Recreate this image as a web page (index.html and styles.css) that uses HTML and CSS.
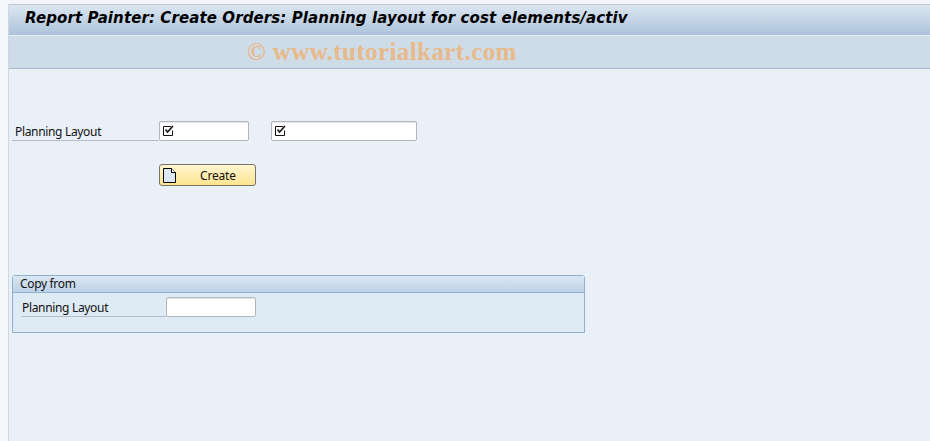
FILE: index.html
```html
<!DOCTYPE html>
<html lang="en">
<head>
    <meta charset="UTF-8">
    <title>Report Painter: Create Orders</title>
    <link rel="stylesheet" href="styles.css">
</head>
<body>
    <div class="window">
        <div class="title-bar">Report Painter: Create Orders: Planning layout for cost elements/activ</div>
        <div class="tool-bar">
            <span class="watermark">© www.tutorialkart.com</span>
        </div>
        <div class="content">
            <div class="field-row">
                <span class="field-label">Planning Layout</span>
                <span class="input input-short">
                    <svg class="check-icon" width="12" height="12" viewBox="0 0 12 12"><path d="M9 2.5H1.5v9h9V6.5" fill="none" stroke="#111"/><path d="M3.5 5.5l2 2.5L11 2" fill="none" stroke="#111" stroke-width="1.5"/></svg>
                </span>
                <span class="input input-long">
                    <svg class="check-icon" width="12" height="12" viewBox="0 0 12 12"><path d="M9 2.5H1.5v9h9V6.5" fill="none" stroke="#111"/><path d="M3.5 5.5l2 2.5L11 2" fill="none" stroke="#111" stroke-width="1.5"/></svg>
                </span>
            </div>
            <button class="create-btn">
                <svg class="doc-icon" width="13" height="15" viewBox="0 0 13 15"><path d="M.5.5h8l4 4v10H.5z" fill="#dce9f5" stroke="#000"/><path d="M8.5.5v4h4" fill="#fff" stroke="#000"/></svg>
                <span class="create-text">Create</span>
            </button>
            <div class="group-box">
                <div class="group-title">Copy from</div>
                <div class="group-body">
                    <span class="field-label group-label">Planning Layout</span>
                    <span class="input input-short"></span>
                </div>
            </div>
        </div>
    </div>
</body>
</html>
```

FILE: styles.css
```css
html, body {
    height: 100%;
}

body {
    margin: 0;
    padding: 4px 0 0 8px;
    box-sizing: border-box;
    background-color: #f4f6f9;
    font-family: "Noto Sans", Tahoma, sans-serif;
    font-size: 12px;
    letter-spacing: -0.33px;
    color: #111;
    overflow: hidden;
}

.window {
    height: 100%;
    display: flex;
    flex-direction: column;
    background-color: #e9f0f8;
    border-left: 1px solid #cdd7e2;
}

.title-bar {
    height: 30px;
    line-height: 27px;
    padding-left: 16px;
    border-top: 1px solid #bcc8d6;
    border-bottom: 1px solid #e3ebf3;
    background: linear-gradient(#dbe6f1, #adc3da);
    font-family: "DejaVu Sans", Verdana, sans-serif;
    font-size: 15px;
    font-weight: bold;
    font-style: italic;
    letter-spacing: 0.1px;
    color: #000;
    white-space: nowrap;
}

.tool-bar {
    height: 32px;
    padding-left: 238px;
    border-bottom: 1px solid #a9bbcf;
    background-color: #cedce8;
    display: flex;
    align-items: center;
}

.watermark {
    font-family: "Liberation Serif", serif;
    font-size: 25px;
    font-weight: bold;
    letter-spacing: 0.4px;
    color: #e8b98a;
    white-space: nowrap;
}

.content {
    padding: 52px 0 0 3px;
    display: flex;
    flex-direction: column;
    align-items: flex-start;
}

.field-row {
    display: flex;
    align-items: flex-start;
}

.field-label {
    width: 147px;
    height: 20px;
    box-sizing: border-box;
    padding: 3px 0 0 3px;
    line-height: 16px;
    border-bottom: 1px solid #b4bcc6;
}

.input {
    height: 20px;
    box-sizing: border-box;
    display: block;
    background-color: #fff;
    border: 1px solid #b3b7bb;
    border-radius: 2px;
    box-shadow: inset 0 1px 1px #e4e4e4;
}

.input-short {
    width: 90px;
}

.input-long {
    width: 146px;
    margin-left: 22px;
}

.check-icon {
    display: block;
    margin: 2px 0 0 2px;
}

.create-btn {
    margin: 23px 0 0 147px;
    width: 97px;
    height: 22px;
    padding: 0;
    display: flex;
    align-items: center;
    border: 1px solid #77736a;
    border-radius: 3px;
    background: linear-gradient(#fff6d2, #fde48f);
    font-family: inherit;
    font-size: 12px;
    letter-spacing: -0.2px;
    color: #111;
}

.doc-icon {
    margin-left: 3px;
}

.create-text {
    margin-left: 24px;
}

.group-box {
    margin-top: 89px;
    width: 573px;
    height: 58px;
    box-sizing: border-box;
    border: 1px solid #8fb0cf;
    border-radius: 3px 3px 0 0;
    background-color: #deeaf4;
}

.group-title {
    height: 17px;
    line-height: 15px;
    padding-left: 7px;
    box-sizing: border-box;
    border-bottom: 1px solid #8fb0cf;
    background: linear-gradient(#dbe7f2, #bdd2e7);
}

.group-body {
    padding: 4px 0 0 8px;
    display: flex;
    align-items: flex-start;
}

.group-label {
    width: 145px;
    padding-left: 1px;
}
```
